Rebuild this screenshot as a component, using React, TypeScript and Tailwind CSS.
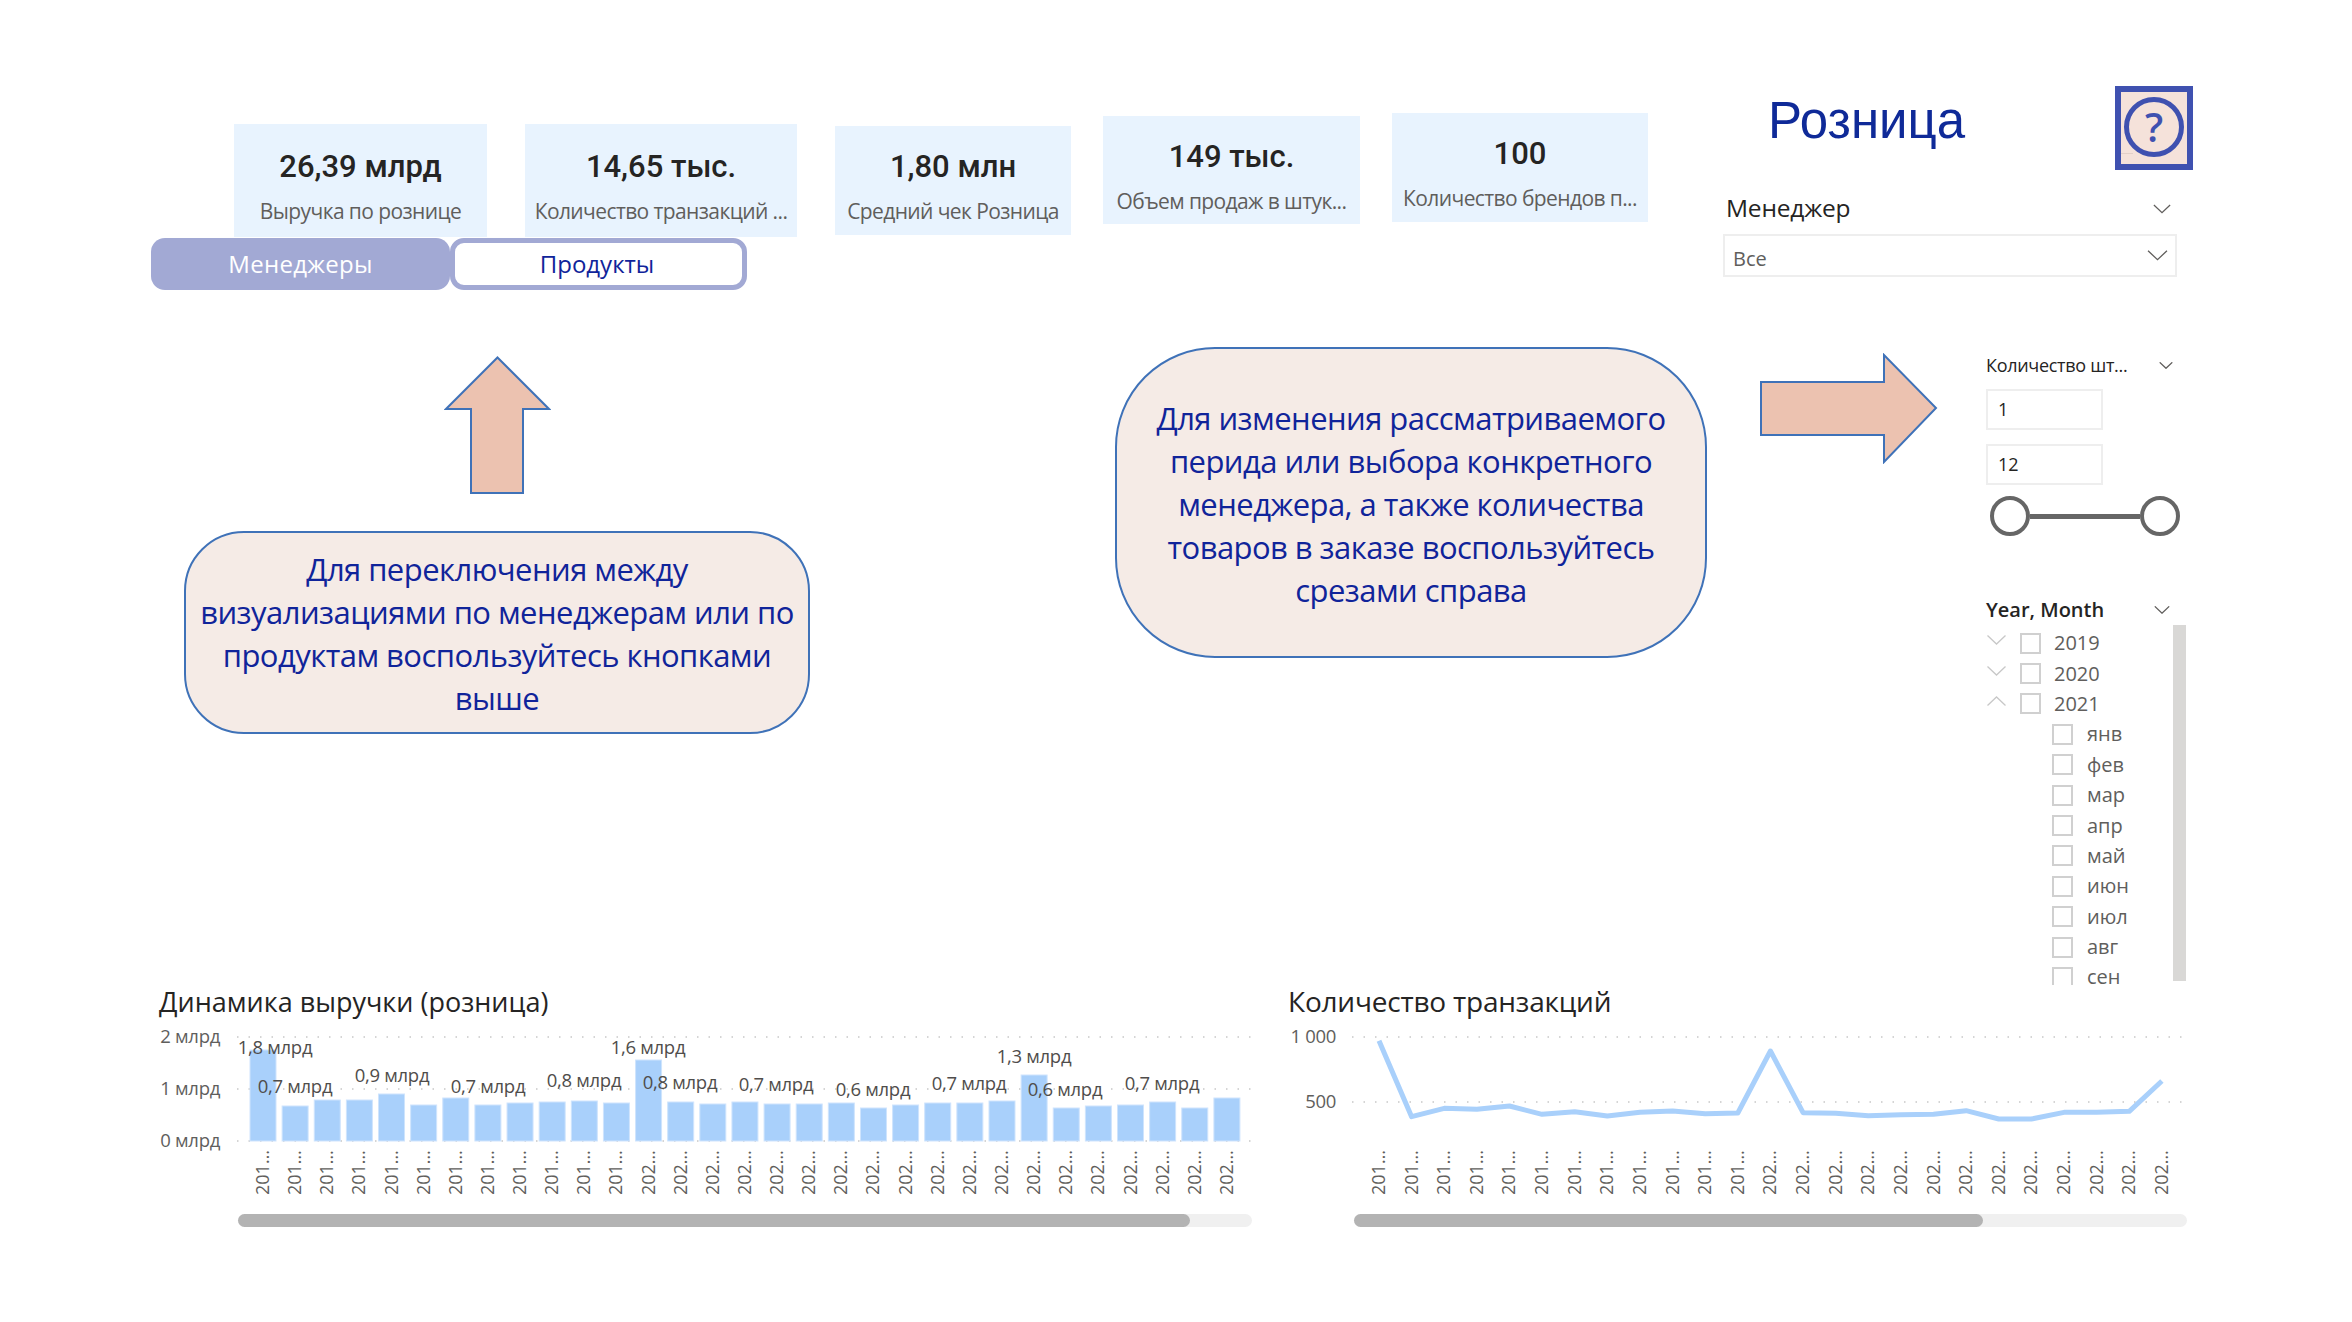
import React from "react";

const BODY = "font-['Open_Sans','Noto_Sans',sans-serif]";

const barTops = [
  1050, 1106, 1100, 1100, 1094, 1105, 1098, 1105, 1103, 1102, 1101, 1103, 1060, 1102, 1104, 1102, 1104, 1104, 1103, 1108,
  1105, 1103, 1103, 1101, 1075, 1108, 1106, 1105, 1102, 1108, 1098,
];

const barLabels = [
  { x: 275, y: 1048, t: "1,8 млрд" },
  { x: 295, y: 1087, t: "0,7 млрд" },
  { x: 392, y: 1076, t: "0,9 млрд" },
  { x: 488, y: 1087, t: "0,7 млрд" },
  { x: 584, y: 1081, t: "0,8 млрд" },
  { x: 648, y: 1048, t: "1,6 млрд" },
  { x: 680, y: 1083, t: "0,8 млрд" },
  { x: 776, y: 1085, t: "0,7 млрд" },
  { x: 873, y: 1090, t: "0,6 млрд" },
  { x: 969, y: 1084, t: "0,7 млрд" },
  { x: 1034, y: 1057, t: "1,3 млрд" },
  { x: 1065, y: 1090, t: "0,6 млрд" },
  { x: 1162, y: 1084, t: "0,7 млрд" },
];

const linePts = [212, 440, 415, 418, 408, 433, 425, 438, 427, 423, 431, 429, 243, 428, 430, 437, 434, 433, 422, 447, 447, 427, 427, 424, 333];

const months = ["янв", "фев", "мар", "апр", "май", "июн", "июл", "авг", "сен"];

const Chevron = ({ up, className }: { up?: boolean; className: string }) => (
  <svg viewBox="0 0 20 10" fill="none" className={className}>
    <polyline
      points={up ? "1,9.5 10,1 19,9.5" : "1,0.5 10,9 19,0.5"}
      stroke="currentColor"
      strokeWidth="1.3"
      vectorEffect="non-scaling-stroke"
    />
  </svg>
);

const Kpi = ({ value, label, className }: { value: string; label: string; className: string }) => (
  <div className={`flex flex-col items-center bg-[#e8f3fe] ${className}`}>
    <div className="mt-[20px] h-[42px] font-['Roboto',sans-serif] text-[31px] leading-[42px] font-medium text-[#252423]">{value}</div>
    <div className={`mt-[8px] text-[21px] leading-[30px] text-[#605e5c] tracking-[-0.6px] whitespace-nowrap ${BODY}`}>{label}</div>
  </div>
);

const Callout = ({ lines, className }: { lines: string[]; className: string }) => (
  <div className={`flex flex-col items-center justify-center border-2 border-[#3f72b8] bg-[#f5ebe6] pt-[3px] text-[31px] leading-[43px] text-[#10249a] tracking-[-0.55px] whitespace-nowrap ${BODY} ${className}`}>
    {lines.map((l) => (
      <div key={l}>{l}</div>
    ))}
  </div>
);

const Checkbox = () => <div className="h-[21px] w-[21px] shrink-0 border-2 border-[#d0d0d0] bg-white" />;

const Scrollbar = ({ thumb, className }: { thumb: string; className: string }) => (
  <div className={`mt-[9px] h-[13px] rounded-full bg-[#f0f0f0] ${className}`}>
    <div className={`h-full rounded-full bg-[#b3b3b3] ${thumb}`} />
  </div>
);

const BarChart = () => (
  <svg viewBox="159 1019 1093 186" className="h-[186px] w-[1093px] font-['Open_Sans',sans-serif]">
    {[1037, 1089, 1141].map((y) => (
      <line key={y} x1={237} x2={1252} y1={y} y2={y} stroke="#c8c8c8" strokeWidth="1.5" strokeDasharray="1.5 10" />
    ))}
    {[
      { y: 1037, t: "2 млрд" },
      { y: 1089, t: "1 млрд" },
      { y: 1141, t: "0 млрд" },
    ].map((a) => (
      <text key={a.t} x={220} y={a.y + 6} textAnchor="end" fontSize="18.5" letterSpacing="-0.3" fill="#605e5c">
        {a.t}
      </text>
    ))}
    {barTops.map((top, i) => (
      <rect key={i} x={250 + i * 32.13} y={top} width={26} height={1141 - top} fill="#a9d0fb" stroke="#cfe4fd" strokeWidth="1" />
    ))}
    {barLabels.map((l) => (
      <text key={l.x} x={l.x} y={l.y + 6} textAnchor="middle" fontSize="18.5" letterSpacing="-0.3" fill="#4f4d4b">
        {l.t}
      </text>
    ))}
    {barTops.map((_, i) => {
      const x = 263 + i * 32.13;
      return (
        <text key={i} x={x + 6} y={1195} transform={`rotate(-90 ${x + 6} 1195)`} fontSize="18" fill="#605e5c">
          {i < 12 ? "201…" : "202…"}
        </text>
      );
    })}
  </svg>
);

const LineChart = () => {
  const xs = linePts.map((_, i) => 1379 + i * 32.62);
  const points = linePts.map((p, i) => `${xs[i]},${970 + p / 3}`).join(" ");
  return (
    <svg viewBox="1288 1019 902 186" className="h-[186px] w-[902px] font-['Open_Sans',sans-serif]">
      {[1037, 1102].map((y) => (
        <line key={y} x1={1352} x2={2188} y1={y} y2={y} stroke="#c8c8c8" strokeWidth="1.5" strokeDasharray="1.5 10" />
      ))}
      <text x={1336} y={1043} textAnchor="end" fontSize="18.5" letterSpacing="-0.3" fill="#605e5c">
        1 000
      </text>
      <text x={1336} y={1108} textAnchor="end" fontSize="18.5" letterSpacing="-0.3" fill="#605e5c">
        500
      </text>
      <polyline points={points} fill="none" stroke="#a9d0fb" strokeWidth="5" strokeLinejoin="round" />
      {xs.map((x, i) => (
        <text key={i} x={x + 6} y={1195} transform={`rotate(-90 ${x + 6} 1195)`} fontSize="18" fill="#605e5c">
          {i < 12 ? "201…" : "202…"}
        </text>
      ))}
    </svg>
  );
};

export default function App() {
  return (
    <div className={`flex h-[1322px] w-[2352px] flex-col overflow-hidden bg-white pt-[86px] ${BODY}`}>
      <div className="flex h-[899px] shrink-0">
        {/* left part: kpi cards, buttons, hints */}
        <div className="w-[1723px] shrink-0">
          <div className="flex items-start">
            <div className="ml-[151px] mt-[38px] flex flex-col">
              <div className="ml-[83px] flex gap-[38px]">
                <Kpi value="26,39 млрд" label="Выручка по рознице" className="h-[113px] w-[253px] pt-[2px]" />
                <Kpi value="14,65 тыс." label="Количество транзакций ..." className="h-[113px] w-[272px] pt-[2px]" />
              </div>
              <div className="mt-[1px] flex">
                <div className="flex h-[52px] w-[299px] items-center justify-center rounded-[14px] bg-[#a2a9d4] text-[24px] tracking-[0.3px] text-white">Менеджеры</div>
                <div className="flex h-[52px] w-[297px] items-center justify-center rounded-[14px] border-[5px] border-[#a2a9d4] bg-white pr-[3px] text-[24px] text-[#10249a]">Продукты</div>
              </div>
            </div>
            <Kpi value="1,80 млн" label="Средний чек Розница" className="ml-[38px] mt-[40px] h-[109px] w-[236px]" />
            <Kpi value="149 тыс." label="Объем продаж в штук..." className="ml-[32px] mt-[30px] h-[108px] w-[257px]" />
            <Kpi value="100" label="Количество брендов п..." className="ml-[32px] mt-[27px] h-[109px] w-[256px]" />
          </div>

          <div className="mt-[57px] flex items-start">
            <div className="ml-[184px] flex w-[626px] flex-col items-center">
              <svg viewBox="0 0 107 139" className="mt-[9px] h-[139px] w-[107px]">
                <polygon points="53.5,1.5 105,53 79,53 79,137 27,137 27,53 2,53" fill="#ecc2b0" stroke="#3f72b8" strokeWidth="2" />
              </svg>
              <Callout
                className="mt-[36px] h-[203px] w-[626px] rounded-[60px]"
                lines={["Для переключения между", "визуализациями по менеджерам или по", "продуктам воспользуйтесь кнопками", "выше"]}
              />
            </div>
            <Callout
              className="ml-[305px] h-[311px] w-[592px] rounded-[100px]"
              lines={["Для изменения рассматриваемого", "перида или выбора конкретного", "менеджера, а также количества", "товаров в заказе воспользуйтесь", "срезами справа"]}
            />
          </div>
        </div>

        {/* right part: title and slicers */}
        <div className="w-[470px] shrink-0">
          <div className="flex h-[84px] items-start">
            <div className="ml-[45px] mt-[8px] w-[197px] font-['Liberation_Sans',sans-serif] text-[51px] leading-[54px] text-[#0f2a98]">Розница</div>
            <div className="relative ml-[150px] flex h-[84px] w-[78px] items-center justify-center border-[6px] border-[#3f51b0] bg-[#f5e2da]">
              <div className="mt-[-2px] flex h-[60px] w-[60px] items-center justify-center rounded-full border-[5px] border-[#3f51b0] text-[40px] font-semibold leading-none text-[#3f51b0]">?</div>
              <div className="absolute bottom-[10px] left-0 h-px w-[12px] bg-[#e3d0c8]" />
            </div>
          </div>

          <div className="mt-[20px] flex h-[36px] w-[453px] items-center justify-between pl-[3px] pr-[5px]">
            <span className="text-[24.5px] tracking-[-0.2px] text-[#252423]">Менеджер</span>
            <Chevron className="mt-[2px] h-[10px] w-[18px] text-[#605e5c]" />
          </div>
          <div className="mt-[8px] flex h-[43px] w-[454px] items-center justify-between border-2 border-[#eeeeee] pl-[8px] pr-[7px] text-[20px] text-[#605e5c]">
            <span className="pt-[6px]">Все</span>
            <Chevron className="h-[11px] w-[21px] text-[#605e5c]" />
          </div>

          <div className="mt-[73px] flex items-start">
            <svg viewBox="0 0 179 111" className="ml-[36px] mt-[3px] h-[111px] w-[179px] shrink-0">
              <polygon points="2,29 125,29 125,2 177,55 125,109 125,82 2,82" fill="#ecc2b0" stroke="#3f72b8" strokeWidth="2" />
            </svg>
            <div className="ml-[48px] w-[200px] shrink-0">
              <div className="flex h-[30px] items-center justify-between pr-[13px] text-[18px] tracking-[-0.3px] text-[#252423]">
                <span>Количество шт...</span>
                <Chevron className="h-[7px] w-[14px] text-[#605e5c]" />
              </div>
              <div className="mt-[9px] flex h-[41px] w-[117px] items-center border-2 border-[#eeeeee] pl-[10px] text-[18px] text-[#252423]">1</div>
              <div className="mt-[14px] flex h-[41px] w-[117px] items-center border-2 border-[#eeeeee] pl-[10px] text-[18px] text-[#252423]">12</div>
              <div className="ml-[4px] mt-[11px] flex h-[40px] w-[190px] items-center">
                <div className="h-[40px] w-[40px] shrink-0 rounded-full border-4 border-[#666666] bg-white" />
                <div className="h-[5px] flex-1 bg-[#666666]" />
                <div className="h-[40px] w-[40px] shrink-0 rounded-full border-4 border-[#666666] bg-white" />
              </div>

              <div className="mt-[59px] flex h-[30px] items-center justify-between pr-[15px]">
                <span className="text-[20px] font-semibold text-[#252423]">Year, Month</span>
                <Chevron className="h-[8px] w-[18px] text-[#605e5c]" />
              </div>
              <div className="flex h-[360px] items-start overflow-hidden">
                <div className="w-[187px] shrink-0 pt-[3px] text-[20px] text-[#605e5c]">
                  {["2019", "2020", "2021"].map((y) => (
                    <div key={y} className="flex h-[30.4px] items-center">
                      <Chevron up={y === "2021"} className="mb-[6px] h-[10px] w-[21px] shrink-0 text-[#c8c8c8]" />
                      <div className="ml-[13px]">
                        <Checkbox />
                      </div>
                      <span className="ml-[13px]">{y}</span>
                    </div>
                  ))}
                  {months.map((m) => (
                    <div key={m} className="flex h-[30.4px] items-center pl-[66px]">
                      <Checkbox />
                      <span className="ml-[14px]">{m}</span>
                    </div>
                  ))}
                </div>
                <div className="h-[356px] w-[13px] shrink-0 bg-[#d9d8d6]" />
              </div>
            </div>
          </div>
        </div>
      </div>

      {/* bottom charts */}
      <div className="flex pl-[159px]">
        <div className="w-[1093px] shrink-0">
          <div className="flex h-[34px] items-center text-[27px] text-[#252423]">Динамика выручки (розница)</div>
          <BarChart />
          <Scrollbar className="ml-[79px] w-[1014px]" thumb="w-[952px]" />
        </div>
        <div className="ml-[36px] w-[902px] shrink-0">
          <div className="flex h-[34px] items-center pb-[2px] text-[28px] tracking-[-0.2px] text-[#252423]">Количество транзакций</div>
          <LineChart />
          <Scrollbar className="ml-[66px] w-[833px]" thumb="w-[629px]" />
        </div>
      </div>
    </div>
  );
}
